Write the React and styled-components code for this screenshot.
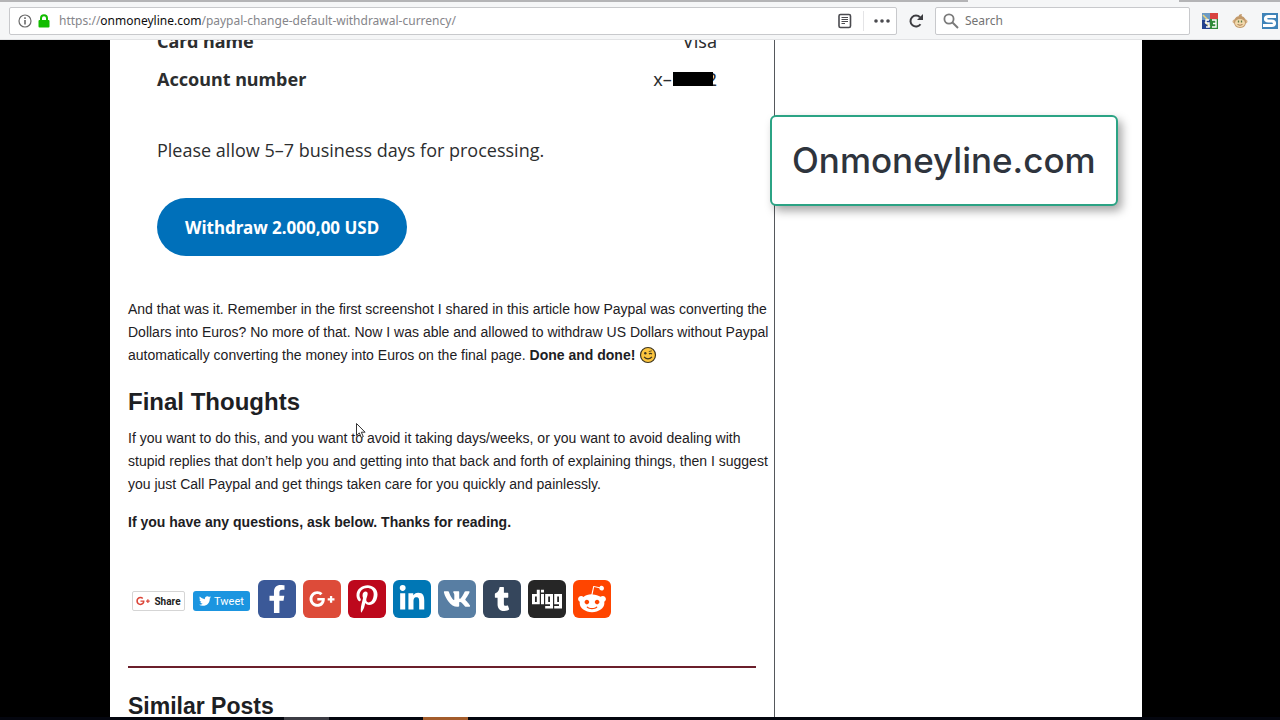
import React from "react";
import styled, { createGlobalStyle } from "styled-components";
import {
  FaFacebookF,
  FaGooglePlusG,
  FaPinterestP,
  FaLinkedinIn,
  FaVk,
  FaTumblr,
  FaDigg,
  FaRedditAlien,
  FaTwitter,
} from "react-icons/fa";

const socials = [
  { name: "Facebook", color: "#3b5998", size: 28, Icon: FaFacebookF },
  { name: "Google Plus", color: "#dd4b39", size: 26, Icon: FaGooglePlusG },
  { name: "Pinterest", color: "#bd081c", size: 28, Icon: FaPinterestP },
  { name: "LinkedIn", color: "#0077b5", size: 28, Icon: FaLinkedinIn },
  { name: "VK", color: "#587ea3", size: 28, Icon: FaVk },
  { name: "Tumblr", color: "#35465c", size: 24, Icon: FaTumblr },
  { name: "Digg", color: "#262626", size: 30, Icon: FaDigg },
  { name: "Reddit", color: "#ff4500", size: 30, Icon: FaRedditAlien },
];

export default function App() {
  return (
    <Screen>
      <GlobalStyle />
      <TabStrip>
        <TabEdge $grow={968} />
        <TabGap />
        <TabEdge $grow={101} />
      </TabStrip>
      <Toolbar>
        <UrlBar>
          <InfoIcon />
          <LockIcon />
          <Url>
            https://<b>onmoneyline.com</b>/paypal-change-default-withdrawal-currency/
          </Url>
          <IconButton aria-label="Reader view"><ReaderIcon /></IconButton>
          <Divider />
          <IconButton aria-label="Page actions"><DotsIcon /></IconButton>
        </UrlBar>
        <ReloadButton aria-label="Reload"><ReloadIcon /></ReloadButton>
        <SearchBox>
          <SearchIcon />
          <SearchInput type="text" placeholder="Search" aria-label="Search" />
        </SearchBox>
        <Extensions>
          <IconButton aria-label="S3 organizer"><BlocksIcon /></IconButton>
          <IconButton aria-label="Monkey"><MonkeyIcon /></IconButton>
          <IconButton aria-label="Stylish"><StylishIcon /></IconButton>
        </Extensions>
      </Toolbar>

      <Viewport>
        <Page>
          <Article>
            <Receipt>
              <ReceiptRow>
                <dt>Card name</dt>
                <dd>Visa</dd>
              </ReceiptRow>
              <ReceiptRow>
                <dt>Account number</dt>
                <dd>x–<Redacted />2</dd>
              </ReceiptRow>
            </Receipt>
            <Notice>Please allow 5–7 business days for processing.</Notice>
            <Withdraw>Withdraw 2.000,00 USD</Withdraw>

            <Text>
              And that was it. Remember in the first screenshot I shared in this article how Paypal was converting the
              Dollars into Euros? No more of that. Now I was able and allowed to withdraw US Dollars without Paypal
              automatically converting the money into Euros on the final page. <b>Done and done!</b> <WinkIcon />
            </Text>
            <Title>Final Thoughts</Title>
            <Text>
              If you want to do this, and you want to avoid it taking days/weeks, or you want to avoid dealing with
              stupid replies that don’t help you and getting into that back and forth of explaining things, then I
              suggest you just Call Paypal and get things taken care for you quickly and painlessly.
            </Text>
            <Text><b>If you have any questions, ask below. Thanks for reading.</b></Text>

            <ShareRow>
              <ShareButton><FaGooglePlusG size={14} color="#db4437" />Share</ShareButton>
              <TweetButton><FaTwitter size={12} />Tweet</TweetButton>
              {socials.map(({ name, color, size, Icon }) => (
                <Social key={name} href="#" aria-label={name} $color={color}>
                  <Icon size={size} />
                </Social>
              ))}
            </ShareRow>

            <Rule />
            <Subtitle>Similar Posts</Subtitle>
          </Article>
          <Sidebar />
        </Page>
        <Callout>Onmoneyline.com</Callout>
        <Cursor />
      </Viewport>
      <Taskbar>
        <TaskItem $color="#3c3c44" />
        <TaskItem $color="#a35c2b" />
      </Taskbar>
    </Screen>
  );
}

function InfoIcon() {
  return (
    <svg width="14" height="14" viewBox="0 0 14 14" fill="none" stroke="#6a6a6a">
      <circle cx="7" cy="7" r="6" strokeWidth="1.2" />
      <path d="M7 6v4.500M7 3.300v1.600" strokeWidth="1.600" />
    </svg>
  );
}

function LockIcon() {
  return (
    <svg width="12" height="14" viewBox="0 0 12 14">
      <path d="M3 7V4.200a3 3 0 0 1 6 0V7" fill="none" stroke="#12bc00" strokeWidth="2" />
      <rect x="0.500" y="6" width="11" height="7.500" rx="1" fill="#12bc00" />
    </svg>
  );
}

function ReaderIcon() {
  return (
    <svg width="14" height="16" viewBox="0 0 14 16" fill="none" stroke="#4a4a4f">
      <rect x="1" y="1.500" width="11.500" height="13" rx="1.500" strokeWidth="1.600" />
      <path d="M3.500 4.500h6.500M3.500 6.500h6.500M3.500 8.500h6.500M3.500 10.500h3.500" />
    </svg>
  );
}

function DotsIcon() {
  return (
    <svg width="16" height="4" viewBox="0 0 16 4" fill="#4a4a4f">
      <circle cx="2" cy="2" r="1.800" />
      <circle cx="8" cy="2" r="1.800" />
      <circle cx="14" cy="2" r="1.800" />
    </svg>
  );
}

function ReloadIcon() {
  return (
    <svg width="16" height="16" viewBox="0 0 16 16">
      <path d="M12.500 11.200A5.500 5.500 0 1 1 12 4.300" fill="none" stroke="#3c3c40" strokeWidth="2" />
      <path d="M15 1v6H9z" fill="#3c3c40" />
    </svg>
  );
}

function SearchIcon() {
  return (
    <svg width="16" height="16" viewBox="0 0 16 16" fill="none" stroke="#7a7a7a" strokeWidth="1.800">
      <circle cx="6" cy="6" r="4.600" />
      <path d="M9.500 9.500l5.500 5.500" strokeWidth="2" />
    </svg>
  );
}

function BlocksIcon() {
  return (
    <svg width="16" height="16" viewBox="0 0 16 16">
      <rect width="8" height="8" fill="#6c9ac4" />
      <rect x="8" width="8" height="6" fill="#d8433f" />
      <rect x="8" y="6" width="8" height="10" fill="#2f8b3a" />
      <rect y="7" width="8" height="9" fill="#23408e" />
      <path d="M1 2l5 5M3 9l5 5" stroke="#e8d27a" strokeWidth="1.500" />
      <path d="M7 7h-3v3h3v4h-3M10 7h4v7h-4M11 10.500h3" fill="none" stroke="#fff" strokeWidth="1.400" />
    </svg>
  );
}

function MonkeyIcon() {
  return (
    <svg width="16" height="16" viewBox="0 0 16 16">
      <circle cx="2.500" cy="8.500" r="2" fill="#d9b58b" />
      <circle cx="13.500" cy="8.500" r="2" fill="#d9b58b" />
      <path d="M8 3c4 0 6 3 6 6s-2 6-6 6-6-3-6-6 2-6 6-6z" fill="#c39a6b" />
      <path d="M7 4c-1-2 1-3 3-3-1 1 0 2 0 3z" fill="#c39a6b" />
      <ellipse cx="8" cy="10" rx="5" ry="4" fill="#f1d9ac" />
      <path d="M6.500 7.500v2M9.500 7.500v2" stroke="#5d7a45" strokeWidth="1.300" />
      <path d="M5.500 11.500q2.500 1.500 5 0" fill="none" stroke="#a9794f" />
    </svg>
  );
}

function StylishIcon() {
  return (
    <svg width="16" height="16" viewBox="0 0 16 16">
      <rect width="16" height="16" fill="#3f83b8" />
      <path d="M14 3.500H6.500q-3 0-3 2.200T6.500 8h3q3 0 3 2.300t-3 2.200H1" fill="none" stroke="#fff" strokeWidth="3.200" />
    </svg>
  );
}

function WinkIcon() {
  return (
    <Emoji viewBox="0 0 18 18" role="img" aria-label="wink">
      <circle cx="9" cy="9" r="7.500" fill="#fcc53f" stroke="#3d3520" strokeWidth="1.200" />
      <circle cx="6.300" cy="7.300" r="1.200" fill="#3d3520" />
      <path d="M10 8q1.500-1.300 3 0M5 10.800q4 4 8 0" fill="none" stroke="#3d3520" strokeWidth="1.200" />
      <path d="M9.800 5.600l3-.8" fill="none" stroke="#3d3520" strokeWidth="0.800" />
    </Emoji>
  );
}

function Cursor() {
  return (
    <Pointer viewBox="0 0 10 16">
      <path d="M.5.500v12l2.800-2.600 2 4.600 2-.9-2-4.400h3.800z" fill="#fff" stroke="#333" />
    </Pointer>
  );
}

const GlobalStyle = createGlobalStyle`
  * {
    box-sizing: border-box;
  }
  body {
    margin: 0;
    background: #000;
    color: #1d2023;
    font-family: "Liberation Sans", Arial, sans-serif;
    font-size: 14px;
  }
`;

const Screen = styled.div`
  display: flex;
  flex-direction: column;
  height: 100vh;
  overflow: hidden;
`;

const TabStrip = styled.div`
  display: flex;
  flex: none;
  height: 2px;
  background: #f5f6f7;
`;

const TabEdge = styled.div`
  flex: ${(props) => props.$grow} 1 0;
  background: #b4b4b6;
`;

const TabGap = styled.div`
  flex: 211 1 0;
`;

const Toolbar = styled.header`
  display: flex;
  align-items: center;
  flex: none;
  height: 38px;
  padding: 0 2px 0 9px;
  background: #f5f6f7;
  border-bottom: 1px solid #e2e3e5;
  font-family: "Noto Sans", sans-serif;
  font-size: 12px;
`;

const UrlBar = styled.div`
  display: flex;
  align-items: center;
  flex: 1;
  height: 28px;
  padding: 0 6px 0 8px;
  gap: 6px;
  background: #fff;
  border: 1px solid #c8c9cc;
  border-radius: 2px;
`;

const Url = styled.span`
  flex: 1;
  padding-left: 3px;
  color: #85858a;
  white-space: nowrap;

  b {
    color: #0c0c0d;
    font-weight: 400;
  }
`;

const IconButton = styled.button`
  display: flex;
  align-items: center;
  justify-content: center;
  flex: none;
  width: 16px;
  height: 24px;
  padding: 0;
  border: 0;
  background: none;
`;

const ReloadButton = styled(IconButton)`
  width: 38px;
`;

const Divider = styled.span`
  width: 1px;
  height: 20px;
  margin: 0 4px;
  background: #e4e4e6;
`;

const SearchBox = styled.label`
  display: flex;
  align-items: center;
  width: 255px;
  height: 28px;
  padding: 0 7px;
  gap: 6px;
  background: #fff;
  border: 1px solid #c8c9cc;
  border-radius: 2px;
`;

const SearchInput = styled.input`
  flex: 1;
  min-width: 0;
  padding: 0;
  border: 0;
  outline: 0;
  background: none;
  font: inherit;

  &::placeholder {
    color: #737373;
    opacity: 1;
  }
`;

const Extensions = styled.div`
  display: flex;
  flex: none;
  gap: 14px;
  margin-left: 12px;
`;

const Viewport = styled.main`
  position: relative;
  flex: 1;
  min-height: 0;
  overflow: hidden;
  padding-right: 28px;
`;

const Page = styled.div`
  display: grid;
  grid-template-columns: 665fr 367fr;
  max-width: 1032px;
  min-height: 100%;
  margin: 0 auto;
  background: #fff;
`;

const Article = styled.article`
  padding: 0 5px 0 18px;
  border-right: 1px solid #55585c;
`;

const Sidebar = styled.aside`
  min-width: 0;
`;

const Receipt = styled.dl`
  display: flex;
  flex-direction: column;
  gap: 14px;
  margin: -11px 52px 0 29px;
  font-family: "Noto Sans", sans-serif;
  font-size: 18px;
  line-height: 24px;
  color: #2c2e2f;
`;

const ReceiptRow = styled.div`
  display: flex;
  justify-content: space-between;

  dt {
    font-weight: 700;
  }
  dd {
    display: flex;
    align-items: center;
    margin: 0;
  }
`;

const Redacted = styled.span`
  width: 40px;
  height: 14px;
  margin-left: 1px;
  margin-right: -6px;
  background: #000;
  z-index: 1;
`;

const Notice = styled.p`
  margin: 47px 29px 36px;
  font-family: "Open Sans", sans-serif;
  font-size: 18px;
  line-height: 24px;
  color: #2c2e2f;
`;

const Withdraw = styled.button`
  display: block;
  height: 58px;
  margin: 0 29px 42px;
  padding: 0 28px;
  border: 0;
  border-radius: 29px;
  background: #0070ba;
  color: #fff;
  font-family: "Noto Sans", sans-serif;
  font-size: 17px;
  font-weight: 700;
`;

const Text = styled.p`
  margin: 0 0 15px;
  line-height: 23px;
`;

const Title = styled.h2`
  margin: 19px 0 9px;
  font-size: 24px;
  line-height: 32px;
`;

const ShareRow = styled.div`
  display: flex;
  align-items: center;
  gap: 7px;
  margin: 46px 4px 48px;
`;

const ShareWidget = styled.button`
  display: flex;
  align-items: center;
  justify-content: center;
  height: 20px;
  margin: 4px 1px 0 0;
  padding: 0;
  font-family: Roboto, sans-serif;
`;

const ShareButton = styled(ShareWidget)`
  gap: 4px;
  width: 53px;
  border: 1px solid #d5d5d5;
  border-radius: 2px;
  background: #fff;
  color: #222;
  font-size: 10px;
  font-weight: 700;
`;

const TweetButton = styled(ShareWidget)`
  gap: 3px;
  width: 57px;
  border: 0;
  border-radius: 3px;
  background: #1b95e0;
  color: #fff;
  font-size: 11px;
`;

const Social = styled.a`
  display: flex;
  align-items: center;
  justify-content: center;
  width: 38px;
  height: 38px;
  border-radius: 6px;
  background: ${(props) => props.$color};
  color: #fff;
`;

const Rule = styled.hr`
  height: 2px;
  margin: 0 13px 24px 0;
  border: 0;
  background: #6b1f2b;
`;

const Subtitle = styled.h3`
  margin: 0;
  font-size: 23px;
  line-height: 28px;
`;

// floats over the page edge
const Callout = styled.div`
  position: absolute;
  top: 75px;
  left: 770px;
  padding: 20px;
  border: 2px solid #2ba384;
  border-radius: 6px;
  background: #fff;
  box-shadow: 4px 5px 10px rgba(0, 0, 0, 0.35);
  color: #2e343d;
  font-family: Inter, sans-serif;
  font-size: 35px;
  font-weight: 500;
  line-height: 47px;
`;

const Emoji = styled.svg`
  width: 18px;
  height: 18px;
  vertical-align: -4px;
`;

const Pointer = styled.svg`
  position: absolute;
  top: 383px;
  left: 356px;
  width: 10px;
  height: 16px;
`;

const Taskbar = styled.footer`
  display: flex;
  flex: none;
  gap: 94px;
  height: 3px;
  padding-left: 284px;
  background: #04060f;
`;

const TaskItem = styled.div`
  width: 45px;
  background: ${(props) => props.$color};
`;
